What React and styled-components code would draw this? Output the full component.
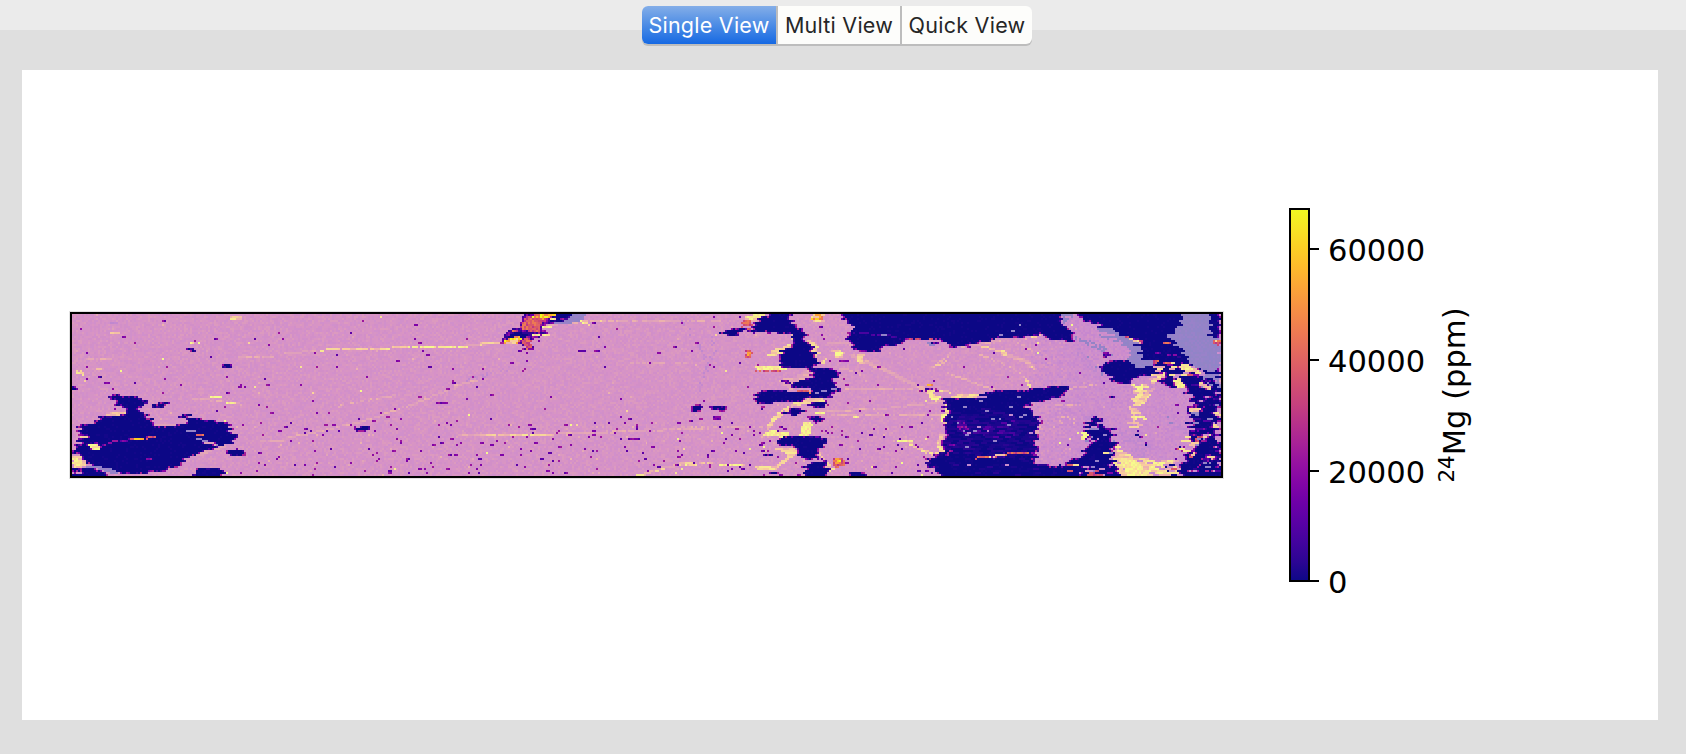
import React from "react";
import styled, { createGlobalStyle, css } from "styled-components";

const GlobalStyle = createGlobalStyle`
  body { margin: 0; background: #dfdfdf; }
`;

/* ---------- element map model ---------- */

const COLS = 575;
const ROWS = 81;

const PALETTES = {
  pink: ["#d28fc8", "#d593c6", "#d794c5", "#d995c3", "#d691c8", "#d190cb", "#dc9abf"],
  lilac: ["#cb8bcd", "#ce8dcc", "#c788cf", "#d08fca", "#cc8fce", "#d393c7"],
  navy: ["#0c0786", "#0c0786", "#0c0786", "#0c0786", "#0c0786", "#0c0786", "#130789", "#0c0786"],
  dusk: ["#0c0786", "#1b068d", "#230590", "#0c0786", "#2a0593", "#120789", "#1b068d"],
  glow: ["#2a0593", "#3a049a", "#48039f", "#5601a4"],
  edge: ["#6a00a8", "#48039f", "#8b0aa5", "#2f0596", "#a62098"],
  pale: ["#9583c8", "#9184c8", "#9982c9", "#9384c5"],
  haze: ["#c589cf", "#bf88cf", "#cb8dcb"],
  peach: ["#dfa0bb", "#e6a9b5", "#e2a4b8", "#ecb2ae"],
  yellow: ["#f7f98d", "#f9e394", "#f7f98d", "#fbd49b", "#f5ee8f"],
  gold: ["#f7d79a", "#f8cc9d", "#f3bfa5", "#ecb2ae", "#f8e794"],
  hot: ["#cc4778", "#d8576b", "#e16462", "#bd3786", "#d8576b", "#ed7953"],
  orange: ["#fb9f3a", "#fdb42f", "#ed7953", "#f0f921", "#fcce25"],
  purple: ["#7e03a8", "#8b0aa5", "#5c01a6", "#9c179e"],
  mixed: ["#7e03a8", "#d8576b", "#f9e394", "#e5a3b8", "#0c0786", "#ca8ccb"],
};

const hash = (x, y, s = 0) => {
  let h = (x * 374761393 + y * 668265263 + s * 2147483647 + 1013904223) | 0;
  h = Math.imul(h ^ (h >>> 13), 1274126177);
  h = Math.imul(h ^ (h >>> 16), 2246822519);
  return ((h ^ (h >>> 15)) >>> 0) / 4294967296;
};

const grid = Array.from({ length: ROWS }, (_, y) =>
  Array.from({ length: COLS }, (_, x) => (x > 478 && hash(x, y, 8) < (x - 470) / 30 ? "lilac" : "pink"))
);

/* Survey coordinates are six units to the cell, counted from a tile's origin. */
const parse = (tile, text) =>
  text.split(" ").map((pair) => {
    const [x, y] = pair.split(",").map(Number);
    return [((tile - 72) * 3 + x) / 6, (y - 42) / 6];
  });

const inside = (pts, x, y) => {
  let hit = false;
  for (let i = 0, j = pts.length - 1; i < pts.length; j = i++) {
    const [xi, yi] = pts[i];
    const [xj, yj] = pts[j];
    if (yi > y !== yj > y && x < ((xj - xi) * (y - yi)) / (yj - yi) + xi) hit = !hit;
  }
  return hit;
};

const area = (tile, kind, text, density = 1, ragged = 2) => {
  const pts = parse(tile, text);
  const ys = pts.map((p) => p[1]);
  const xs = pts.map((p) => p[0]);
  for (let y = Math.max(0, Math.floor(Math.min(...ys))); y < Math.min(ROWS, Math.ceil(Math.max(...ys))); y++) {
    const shift = (hash(y, tile, 3) - 0.5) * ragged;
    for (let x = Math.max(0, Math.floor(Math.min(...xs)) - 2); x < Math.min(COLS, Math.ceil(Math.max(...xs)) + 2); x++) {
      const grain = hash(Math.floor((x + y) / 3), y, 5);
      if (inside(pts, x + 0.5 + shift, y + 0.5) && grain < density) grid[y][x] = kind;
    }
  }
};

const trace = (tile, kind, text, density = 0.85, thick = 1) => {
  const pts = parse(tile, text);
  for (let i = 1; i < pts.length; i++) {
    const [ax, ay] = pts[i - 1];
    const [bx, by] = pts[i];
    const n = Math.ceil(Math.max(Math.abs(bx - ax), Math.abs(by - ay))) || 1;
    for (let k = 0; k <= n; k++) {
      const x = Math.floor(ax + ((bx - ax) * k) / n);
      const y = Math.floor(ay + ((by - ay) * k) / n);
      for (let t = 0; t < thick; t++) {
        if (grid[y + t] && x >= 0 && x < COLS && hash(x, y + t, 6) < density) grid[y + t][x] = kind;
      }
    }
  }
};

const A = 60, B = 280, C = 480, D = 680, E = 820, F = 1020;

/* soft background streaks */
trace(B, "peach", "10,160 60,156 120,151");
trace(B, "gold", "120,151 200,147 380,143", 0.9);
trace(B, "yellow", "380,142 560,139", 0.8);
trace(B, "peach", "560,137 640,130 690,128", 0.9);
trace(B, "peach", "25,412 80,402 170,382 230,368 280,355 340,332 400,312 450,292 500,272 545,252 590,240", 0.85);
trace(B, "peach", "175,318 260,302 350,285", 0.6);
trace(B, "peach", "530,408 600,404 720,402", 0.9);
trace(B, "haze", "560,235 640,218 690,200", 0.5, 2);
trace(C, "gold", "0,402 220,402", 0.85);
trace(C, "peach", "220,400 400,398", 0.9);
trace(C, "peach", "380,395 500,392 600,388 700,384", 0.7);
trace(C, "peach", "285,62 440,62 620,65 720,62", 0.8);
trace(C, "peach", "450,190 620,187", 0.8);
trace(C, "gold", "470,527 505,520 540,508 570,500 600,492 700,487", 0.9, 1);
trace(C, "peach", "495,520 545,504 660,490", 0.9, 1);
trace(C, "gold", "0,132 125,130", 1, 1);
trace(C, "peach", "180,80 230,72 290,66", 0.9, 1);
trace(C, "haze", "610,65 650,110 680,170 685,200 660,260", 0.35, 3);
trace(D, "haze", "90,90 110,150 80,190 75,235", 0.3, 3);
trace(D, "gold", "0,492 50,492");
trace(D, "yellow", "120,492 190,492", 1);
trace(D, "gold", "235,502 290,498 315,480 350,455", 1, 2);
trace(D, "gold", "265,380 285,350 320,325 340,315", 0.9, 3);
trace(D, "peach", "0,382 150,380 260,382", 0.65);
trace(E, "peach", "0,335 100,330 220,323 320,312 380,300", 0.9);
trace(E, "peach", "0,342 140,347 360,347", 0.85);
trace(E, "peach", "80,268 200,266 290,270 390,276", 0.85);
trace(E, "peach", "60,207 115,212 125,225", 0.9);
trace(E, "peach", "100,165 190,203 270,243 325,268", 1, 2);
trace(E, "gold", "325,268 350,290", 1, 3);
trace(E, "gold", "340,275 390,276", 1);
trace(E, "peach", "385,220 450,243 530,272", 0.9, 1);
trace(E, "gold", "490,138 550,157", 1, 1);
trace(E, "peach", "550,157 620,182 645,200", 1, 2);
trace(E, "peach", "480,165 540,187 600,218", 0.7, 1);
trace(E, "peach", "585,120 640,150", 0.8, 1);
trace(E, "gold", "345,200 380,185", 1);
trace(E, "peach", "340,200 395,160", 0.5);
trace(E, "peach", "25,130 90,132", 1);
trace(E, "yellow", "235,423 270,423", 0.9);
trace(E, "gold", "270,425 340,460", 0.8, 2);
trace(E, "gold", "622,235 635,262", 0.7, 2);
trace(A, "peach", "80,175 155,175");
trace(A, "peach", "530,168 640,168");
trace(A, "peach", "670,158 715,158");
trace(A, "gold", "150,99 178,99", 1);
trace(A, "gold", "512,48 540,48", 1, 2);
trace(A, "haze", "150,66 172,66", 1);
trace(A, "peach", "395,297 430,297 540,312", 0.8);
trace(A, "yellow", "455,292 480,292", 0.9, 1);
trace(A, "yellow", "500,308 525,308", 0.9, 1);
trace(A, "peach", "600,422 650,422 670,420", 0.9);
trace(A, "gold", "45,210 60,210 80,242", 0.4, 2);
trace(A, "gold", "110,207 125,207", 1);
trace(A, "yellow", "383,131 415,128", 0.7);

/* speckles */
for (let y = 0; y < ROWS; y++) {
  for (let x = 0; x < COLS; x++) {
    const r = hash(x, y, 11);
    const low = y > 53 && x > 90 && x < 430;
    const p = low ? 0.026 : x > 495 ? 0.004 : 0.0062;
    if (r < p) {
      grid[y][x] = "purple";
      if (hash(x, y, 12) < 0.25 && x + 1 < COLS) grid[y][x + 1] = "purple";
    } else if (r < p + (low ? 0.014 : 0.003)) grid[y][x] = hash(x, y, 13) < 0.2 ? "yellow" : "peach";
  }
}

/* yellow rims, drawn below the dark bodies */
area(D, "gold", "195,60 225,42 260,42 235,60 215,72");
area(D, "yellow", "200,52 225,42 250,42 225,60");
area(D, "gold", "280,95 345,100 355,115 340,125 345,108");
area(D, "gold", "268,165 285,150 335,130 345,135 310,160 285,170");
area(D, "gold", "385,118 405,125 420,155 420,195 400,160");
area(D, "yellow", "228,199 320,198 325,208 240,210", 1, 0);
area(D, "peach", "300,240 350,232 385,205 400,215 385,240 330,270 380,268 400,275 330,270");
area(D, "yellow", "250,400 280,390 325,398 345,412 265,410");
area(D, "yellow", "365,410 370,370 400,362 395,410");
area(D, "gold", "350,300 440,293 440,303 370,315 340,320");
area(D, "yellow", "410,338 440,335 440,345 415,345");
area(D, "gold", "460,150 490,148 500,170 475,175");
area(D, "yellow", "466,155 492,155 490,165 470,166");
area(D, "gold", "415,188 450,175 450,180 430,193");
area(D, "gold", "290,445 350,440 360,460 340,470");
area(D, "gold", "420,445 430,470 450,490 465,510 445,515 430,485");
area(D, "gold", "535,165 560,165 555,190 540,190");
area(D, "yellow", "525,350 545,348 545,355 525,355");
area(E, "gold", "370,300 380,320 395,370 375,380 370,330");
area(E, "yellow", "365,345 395,345 392,366 375,370");
area(E, "gold", "355,405 372,405 372,465 355,462");
area(E, "yellow", "335,287 370,287 365,298 345,298");
area(E, "gold", "380,295 430,280 500,283 470,294 400,300");
area(E, "gold", "545,150 565,155 560,170 550,165");

/* left grain */
area(A, "gold", "130,346 160,336 205,338 205,346");
area(A, "peach", "280,372 350,370 350,380 285,382");
area(A, "peach", "360,475 430,455 490,435 490,442 430,465");
area(A, "navy", "145,283 240,290 260,300 255,320 240,325 245,335 265,345 275,355 285,378 350,376 375,370 390,365 362,352 362,342 390,342 400,355 490,365 518,375 515,400 530,405 525,425 490,435 465,440 430,458 380,475 350,497 325,512 240,520 180,522 110,505 75,492 65,475 60,465 36,462 36,430 60,430 55,405 62,375 95,370 130,348 200,343 205,325 165,315 160,300", 1, 4);
area(A, "navy", "275,320 290,304 325,303 325,318 300,326", 1, 4);
area(A, "navy", "380,147 404,147 410,155 390,155", 1, 0);
area(A, "navy", "485,194 515,195 517,203 490,203", 1, 0);
area(A, "navy", "36,256 44,256 55,264 50,270 36,270", 1, 0);
area(A, "navy", "115,230 138,232 138,237 118,237", 1, 0);
area(A, "purple", "132,247 152,249 150,255 134,253", 1, 0);
area(A, "navy", "495,455 525,446 560,452 560,467 515,471");
area(A, "navy", "400,518 415,504 485,505 492,520 488,528 400,528");
area(A, "navy", "36,505 110,506 150,528 36,528", 0.95);
area(A, "gold", "62,410 88,405 90,410 62,417", 0.8, 0);
area(A, "yellow", "78,430 115,435 125,443 100,453", 1, 1);
area(A, "gold", "36,468 60,466 76,490 60,504 36,502");
area(A, "yellow", "36,474 55,472 65,490 50,502 36,496");
area(A, "pale", "76,495 145,503 172,516 176,525 150,520 120,508 80,502", 1, 0);
trace(A, "purple", "125,440 160,425 230,417 285,411", 0.8);
trace(A, "hot", "215,418 290,412", 0.8);
trace(A, "orange", "225,418 248,416", 1);
trace(A, "pale", "383,392 403,392", 1);
trace(A, "pale", "412,417 440,424 468,436", 1);
trace(A, "peach", "432,426 462,432", 1);
trace(A, "hot", "412,402 428,402", 1);
trace(A, "purple", "260,476 275,478", 1);

/* centre left */
area(B, "navy", "215,388 235,380 267,381 262,393 235,396", 1, 2);
area(B, "purple", "516,241 530,246 528,251 516,251", 1, 0);
trace(B, "purple", "468,308 480,308", 1);
trace(B, "purple", "490,308 498,308", 1);

area(C, "pale", "265,42 322,42 300,62 270,70 215,73 235,60");
area(C, "edge", "118,60 140,42 285,42 240,66 200,74 190,85 197,102 160,115 160,130 145,150 130,152 125,135 70,130 62,115 80,90 120,84", 1, 3);
area(C, "hot", "125,60 145,46 190,44 195,62 180,72 180,95 150,98 118,84 125,78");
area(C, "navy", "200,66 215,52 240,42 285,42 235,66", 0.9);
area(C, "navy", "80,112 105,94 140,96 146,110 115,112", 0.9);
area(C, "hot", "78,98 105,88 120,90 100,98");
area(C, "orange", "75,120 100,110 124,112 120,134 80,132");
area(C, "gold", "95,118 115,116 115,130 85,130");
area(C, "hot", "128,115 158,118 158,132 140,148 130,135");
area(C, "orange", "145,58 175,42 232,44 195,54 160,66", 0.45);
trace(C, "orange", "182,48 208,48", 1);
trace(C, "yellow", "215,54 222,54", 1);
trace(C, "yellow", "190,80 212,80", 1);
trace(C, "yellow", "160,107 208,107", 0.9);
area(C, "yellow", "300,62 325,65 330,76 312,72", 1, 0);
trace(C, "purple", "295,150 315,150", 1);
trace(C, "purple", "342,150 356,150", 1);
trace(C, "purple", "470,373 472,388", 1);

/* central chain */
area(D, "navy", "210,95 215,85 235,60 265,42 330,42 345,70 360,85 385,98 380,116 355,118 335,105 280,95", 1, 3);
area(D, "navy", "130,100 160,82 195,85 195,97 165,109 135,106", 1, 3);
area(D, "hot", "190,60 220,64 210,92 188,84", 0.8);
area(D, "navy", "345,125 355,114 378,114 385,120 400,140 412,165 422,185 420,198 390,207 330,206 300,198 308,180 308,155 330,140", 1, 3);
area(D, "navy", "380,207 460,207 485,225 465,240 470,260 482,270 460,290 430,297 395,292 380,302 330,307 300,303 275,314 230,307 228,290 240,273 290,270 330,275 390,278 385,265 335,262 335,250 375,240 402,232", 1, 3);
area(D, "edge", "310,240 335,238 335,252 315,252");
area(D, "navy", "312,338 345,325 388,328 380,338 330,348", 1, 3);
area(D, "navy", "388,312 440,302 450,310 440,326 400,320", 1, 3);
area(D, "navy", "385,352 430,345 437,358 415,370 395,364", 1, 3);
area(D, "navy", "295,415 330,408 425,405 452,428 425,442 420,472 385,480 360,470 358,445 310,437", 1, 3);
area(D, "navy", "375,500 395,487 435,482 452,510 435,528 372,528", 1, 3);
area(D, "navy", "40,322 55,313 77,316 72,328 60,338 35,338");
area(D, "navy", "88,325 110,315 145,318 148,330 125,338 115,330");
area(D, "purple", "102,349 128,349 128,359 106,360", 1, 0);
area(D, "edge", "240,322 262,320 258,332");
area(D, "navy", "506,520 520,513 558,518 562,528 510,528");
area(D, "navy", "268,517 298,514 300,524 275,525");
area(D, "navy", "258,462 280,462 280,470 258,470", 1, 0);
area(D, "purple", "478,179 510,182 508,188 482,185", 1, 0);
area(D, "gold", "395,42 435,42 435,69 400,67");
area(D, "orange", "395,46 438,42 436,62 400,60", 0.7);
area(D, "hot", "203,150 222,150 218,176 200,172");
area(D, "orange", "205,158 218,158 218,168 205,168", 1, 0);
area(D, "hot", "460,474 492,474 496,495 480,502 462,498");
area(D, "orange", "464,475 480,475 480,492 464,490");
trace(D, "hot", "232,212 300,212", 0.7);
trace(D, "hot", "350,270 395,276", 0.8);
trace(D, "pale", "408,280 418,280", 1);
trace(D, "pale", "430,275 440,275", 1);
trace(D, "pale", "458,267 468,267", 1);

/* upper right body */
area(E, "gold", "635,105 655,98 668,103 655,112 640,114");
area(E, "peach", "400,146 500,126 540,118 545,124 500,132");
area(E, "navy", "62,42 720,42 720,122 695,118 690,105 665,103 640,110 540,115 520,122 400,143 385,140 385,128 350,118 270,118 250,130 190,140 180,155 120,155 95,143 98,130 85,120 88,98 112,82 80,65", 1, 3);
trace(E, "glow", "105,98 150,102 200,104 240,116", 0.7);
trace(E, "hot", "270,118 340,117", 0.5);
trace(E, "pale", "188,103 200,103", 1);
area(E, "pale", "325,128 345,127 345,138 325,137");
trace(E, "navy", "340,131 356,131", 1);
[[580, 90], [602, 76], [607, 72], [610, 70], [628, 66], [545, 107], [643, 47], [640, 60]].forEach(([x, y]) =>
  trace(E, "pale", `${x},${y} ${x + 4},${y}`, 1)
);

/* lower right body with internal texture */
area(E, "dusk", "385,295 470,293 480,285 530,272 630,268 720,258 755,258 752,270 720,294 640,308 625,320 635,345 665,350 670,370 655,395 650,450 650,485 655,492 720,497 720,528 360,528 350,505 330,500 330,475 350,465 370,462 370,410 385,380 380,355 375,320 370,300", 1, 4);
area(E, "navy", "390,295 470,293 480,285 530,272 630,268 755,258 752,270 720,294 640,308 625,320 635,345 655,350 655,365 590,355 560,330 500,320 440,345 390,330");
area(E, "navy", "330,480 370,470 400,440 470,475 640,470 655,492 720,497 720,528 360,528", 0.8);
area(E, "glow", "410,365 440,360 455,400 520,370 530,390 480,410 430,400", 0.7);
area(E, "edge", "415,370 440,365 455,400 430,400", 0.35);
area(E, "glow", "480,380 600,360 580,410 500,420", 0.3);
area(E, "edge", "372,430 400,430 395,470 375,470", 0.35);
area(E, "edge", "642,440 656,440 656,480 642,480", 0.7);
for (let k = 0; k < 26; k++) {
  const x = 390 + hash(k, 4, 20) * 250;
  const y = 290 + hash(k, 9, 21) * 225;
  trace(E, k % 4 ? "pale" : "haze", `${x},${y} ${x + 3},${y}`, 1);
}
trace(E, "hot", "470,474 530,468 580,460 625,458", 0.9);
trace(E, "gold", "510,469 552,466", 0.9);
trace(E, "edge", "385,434 410,434", 1);
trace(E, "haze", "478,291 500,291", 1, 1);

/* far right */
area(F, "pale", "130,42 165,42 160,60 135,75", 0.5);
area(F, "navy", "0,42 128,42 130,75 145,80 165,100 165,125 120,122 90,115 75,102 0,106");
area(F, "navy", "175,42 603,42 603,528 480,528 470,510 500,480 480,460 520,440 525,400 515,380 515,290 490,260 440,262 425,235 400,225 345,232 340,250 320,255 290,245 245,205 255,190 310,180 350,185 370,185 340,135 310,110 260,90 240,85 230,70 190,60", 1, 5);
area(F, "navy", "240,200 275,178 320,180 340,195 430,190 430,225 370,228 345,235 340,252 310,252 285,235 250,215");
area(F, "pale", "235,85 280,83 290,100 330,110 350,130 365,150 367,180 400,182 402,196 360,206 335,190 310,165 290,140 265,120 240,100", 1, 4);
area(F, "lilac", "240,95 290,105 300,125 320,140 335,155 325,178 300,175 240,130", 0.75);
trace(F, "pale", "170,110 230,130 280,155", 0.45, 3);
trace(F, "pale", "200,165 220,190 250,220", 0.4, 3);
trace(F, "haze", "170,130 210,180 240,220", 0.7, 5);
area(F, "edge", "250,160 272,156 272,170 250,172");
area(F, "navy", "210,352 240,350 250,375 285,385 292,405 285,445 285,480 295,528 110,528 110,497 140,495 145,480 185,470 190,450 210,420 205,395", 1, 5);
area(F, "mixed", "100,500 145,490 240,490 280,500 290,528 120,528", 0.18);
area(F, "hot", "195,518 225,508 252,518 245,528 200,528", 0.7);
area(F, "yellow", "190,400 208,395 208,415 195,420");
area(F, "peach", "55,385 70,380 62,405 52,405", 0.7);
area(F, "mixed", "250,445 290,440 300,480 280,490 250,470", 0.2);
area(F, "haze", "430,330 460,350 490,380 515,395 510,410 460,375", 0.8);
area(F, "pale", "440,345 460,355 475,378 460,372", 0.7);
area(F, "haze", "300,390 350,385 390,430 395,470 340,475", 0.7);
area(F, "haze", "165,300 200,320 220,345 190,390 165,350", 0.3);
trace(F, "peach", "155,265 240,252", 0.8);
trace(F, "peach", "110,313 180,313", 0.7);
trace(F, "peach", "120,352 165,355", 0.6);
area(F, "pale", "490,42 575,42 575,105 603,110 603,205 575,218 545,205 520,200 495,165 495,155 470,135 450,105 465,95 490,70", 1, 4);
area(F, "navy", "575,42 603,42 603,85 588,85 590,70 575,65", 0.75);
area(F, "navy", "580,85 603,85 603,115 580,110", 0.5);
area(F, "pale", "540,222 603,225 603,265 575,262 560,240", 0.75);
area(F, "edge", "565,235 585,235 585,248 565,248", 0.8);

/* yellow and broken rims */
area(F, "gold", "335,252 380,250 385,300 350,320 385,350 365,385 335,380 345,330 330,325 340,300", 0.85, 4);
area(F, "yellow", "340,254 372,254 372,270 345,272", 0.9);
area(F, "yellow", "345,340 372,345 368,372 345,365", 0.8);
area(F, "peach", "355,275 400,265 400,290 365,300", 0.4, 4);
area(F, "gold", "285,430 315,450 345,475 465,480 475,528 295,528 285,470", 0.9, 4);
area(F, "yellow", "310,475 345,482 368,492 365,528 315,528", 1, 3);
area(F, "yellow", "380,482 460,484 455,495 385,498", 0.7);
area(F, "yellow", "390,490 440,490 430,528 385,528", 0.6);
area(F, "mixed", "435,490 475,480 485,528 450,528", 0.35);
area(F, "mixed", "470,425 530,400 535,460 500,480 470,470", 0.35, 6);
area(F, "gold", "495,440 522,415 528,430 520,465 490,475", 0.6, 4);
area(F, "mixed", "395,180 460,185 550,205 560,225 500,240 440,235 400,250", 0.45, 4);
area(F, "hot", "400,180 455,188 450,194 405,190", 0.9);
area(F, "gold", "480,192 505,195 545,210 540,217 490,212", 1);
area(F, "yellow", "485,198 525,206 520,212 490,210", 1);
area(F, "yellow", "470,240 490,233 497,262 470,262");
area(F, "gold", "395,250 410,235 405,225 435,218 440,228 410,250");
area(F, "gold", "538,250 550,248 575,264 570,270 545,262");
area(F, "edge", "505,318 555,310 555,338 505,338", 0.5);
area(F, "gold", "515,326 552,326 545,335 515,334");
area(F, "edge", "568,372 603,365 603,395 580,390", 0.6);
area(F, "gold", "578,374 603,372 603,388 585,382");
area(F, "gold", "548,405 575,400 572,412 548,414");
area(F, "hot", "536,412 556,408 552,424 530,425", 0.7);
area(F, "gold", "587,338 603,336 603,347 590,347");
area(F, "edge", "560,462 600,465 590,482 550,490 535,495", 0.6);
area(F, "gold", "560,466 585,466 582,478 562,474", 0.9);
area(F, "hot", "575,120 603,122 603,136 580,132", 0.9);
area(F, "gold", "582,122 600,125 596,131", 1);
trace(F, "hot", "320,110 345,120 368,125", 1);
trace(F, "gold", "335,116 362,126", 1);
trace(F, "edge", "410,158 425,160", 1);
trace(F, "edge", "445,162 480,170", 0.8);
trace(F, "hot", "428,128 450,130", 0.9);
trace(F, "edge", "575,292 603,300", 0.7);
trace(F, "edge", "535,498 550,490 565,485", 1);
area(F, "navy", "265,287 282,288 280,297 266,297");
trace(F, "navy", "355,395 375,420 395,450", 0.4);
trace(F, "navy", "350,405 365,412", 0.8);
area(E, "orange", "325,253 342,254 340,264 328,262", 0.9, 0);
trace(E, "edge", "305,271 350,268", 0.5);
for (let k = 0; k < 38; k++) {
  const x = 505 + hash(k, 1, 30) * 95;
  const y = 235 + hash(k, 2, 31) * 285;
  const kind = ["pale", "edge", "lilac", "glow"][k % 4];
  trace(F, kind, `${x},${y} ${x + 4 + hash(k, 3, 32) * 16},${y}`, 0.9);
}
for (let k = 0; k < 20; k++) {
  const x = 180 + hash(k, 1, 40) * 110;
  const y = 355 + hash(k, 2, 41) * 165;
  trace(F, k % 2 ? "pale" : "lilac", `${x},${y} ${x + hash(k, 3, 42) * 14},${y}`, 0.8);
}

const isDark = (k) => k === "navy" || k === "dusk";
const isLight = (k) => ["pink", "lilac", "peach", "gold", "yellow"].includes(k);

const buildPaths = () => {
  const paths = {};
  for (let y = 0; y < ROWS; y++) {
    let start = 0;
    let last = null;
    for (let x = 0; x <= COLS; x++) {
      let color = null;
      if (x < COLS) {
        let kind = grid[y][x];
        if (isDark(kind)) {
          const side = isLight(grid[y][x - 1]) || isLight(grid[y][x + 1]);
          const cap = isLight((grid[y - 1] || [])[x]) || isLight((grid[y + 1] || [])[x]);
          if ((side && hash(x, y, 50) < 0.8) || (cap && hash(x, y, 51) < 0.35)) kind = "edge";
        }
        const list = PALETTES[kind];
        const wide = ["gold", "peach", "dusk", "glow", "mixed"].includes(kind);
        color = list[Math.floor(hash(wide ? Math.floor((x + y) / 3) : x, y, 2) * list.length)];
      }
      if (color !== last) {
        if (last) paths[last] = (paths[last] || "") + `M${start} ${y}h${x - start}v1h${start - x}z`;
        start = x;
        last = color;
      }
    }
  }
  return Object.entries(paths);
};

const MAP_PATHS = buildPaths();

const PLASMA = [
  "#0d0887", "#2c0594", "#43039e", "#5901a5", "#6e00a8", "#8305a7", "#9511a1", "#a72197",
  "#b6308b", "#c5407e", "#d14e72", "#dd5e66", "#e76e5b", "#f07f4f", "#f79143", "#fca537",
  "#feba2c", "#fccf25", "#f7e425", "#f0f921",
];

/* ---------- layout ---------- */

const Window = styled.div`
  box-sizing: border-box;
  width: 1686px;
  height: 754px;
  display: flex;
  flex-direction: column;
  overflow: hidden;
  padding: 6px 28px 34px 22px;
  background: linear-gradient(#ebebeb 0 30px, #dfdfdf 30px);
`;

const TabBar = styled.nav`
  align-self: flex-start;
  display: flex;
  box-sizing: border-box;
  width: 390px;
  height: 38px;
  margin: 0 0 26px 620px;
  border-radius: 6px;
  background: #fdfdfb;
  box-shadow: 0 2px 0 #bdbdbd;
`;

const Tab = styled.button`
  box-sizing: border-box;
  flex: 0 0 ${(p) => p.$width}px;
  height: 38px;
  padding: 0;
  border: 0;
  border-left: ${(p) => (p.$first ? "0" : "2px solid #bdbdbd")};
  background: transparent;
  color: #262626;
  font: 400 21.5px/38px Inter, "Liberation Sans", sans-serif;
  letter-spacing: 0.25px;
  white-space: nowrap;
  text-align: center;
  ${(p) =>
    p.$active &&
    css`
      color: #fff;
      border-radius: 6px 0 0 6px;
      background: linear-gradient(#84aee8, #4c8ce5 50%, #1669e3);
    `}
`;

const Canvas = styled.main`
  flex: 1;
  display: flex;
  align-items: flex-start;
  background: #fff;
`;

const MapFrame = styled.figure`
  box-sizing: border-box;
  width: 1153px;
  height: 166px;
  margin: 242px 0 0 48px;
  border: 2px solid #000;
  box-shadow: 0 0 0 1px #e2e2e2;
`;

const MapImage = styled.svg`
  display: block;
  width: 1149px;
  height: 162px;
`;

const Scale = styled.svg`
  display: block;
  width: 230px;
  height: 410px;
  margin: 128px 0 0 57px;
  font-family: "DejaVu Sans", sans-serif;
  font-size: 30.56px;
`;

function ElementMap() {
  return (
    <MapFrame>
      <MapImage viewBox={`0 0 ${COLS} ${ROWS}`} preserveAspectRatio="none" shapeRendering="crispEdges">
        {MAP_PATHS.map(([color, d]) => (
          <path key={color} fill={color} d={d} />
        ))}
      </MapImage>
    </MapFrame>
  );
}

const TICKS = [
  { label: "60000", y: 51 },
  { label: "40000", y: 162 },
  { label: "20000", y: 273 },
  { label: "0", y: 383 },
];

function ColorScale() {
  return (
    <Scale viewBox="0 0 230 410">
      <defs>
        <linearGradient id="plasma" x1="0" y1="1" x2="0" y2="0">
          {PLASMA.map((c, i) => (
            <stop key={c} offset={i / (PLASMA.length - 1)} stopColor={c} />
          ))}
        </linearGradient>
      </defs>
      <rect x="10" y="11" width="19" height="372" fill="url(#plasma)" stroke="#000" strokeWidth="2" />
      {TICKS.map((t) => (
        <g key={t.label}>
          <path d={`M29 ${t.y}h10`} stroke="#000" strokeWidth="2" />
          <text x="48" y={t.y + 11.5}>{t.label}</text>
        </g>
      ))}
      <text transform="translate(184.5 284.5) rotate(-90)">
        <tspan fontSize="21.4" dy="-11">24</tspan>
        <tspan dy="11">Mg (ppm)</tspan>
      </text>
    </Scale>
  );
}

export default function App() {
  return (
    <>
      <GlobalStyle />
      <Window>
        <TabBar>
          <Tab $first $active $width={134}>Single View</Tab>
          <Tab $width={124}>Multi View</Tab>
          <Tab $width={132}>Quick View</Tab>
        </TabBar>
        <Canvas>
          <ElementMap />
          <ColorScale />
        </Canvas>
      </Window>
    </>
  );
}
